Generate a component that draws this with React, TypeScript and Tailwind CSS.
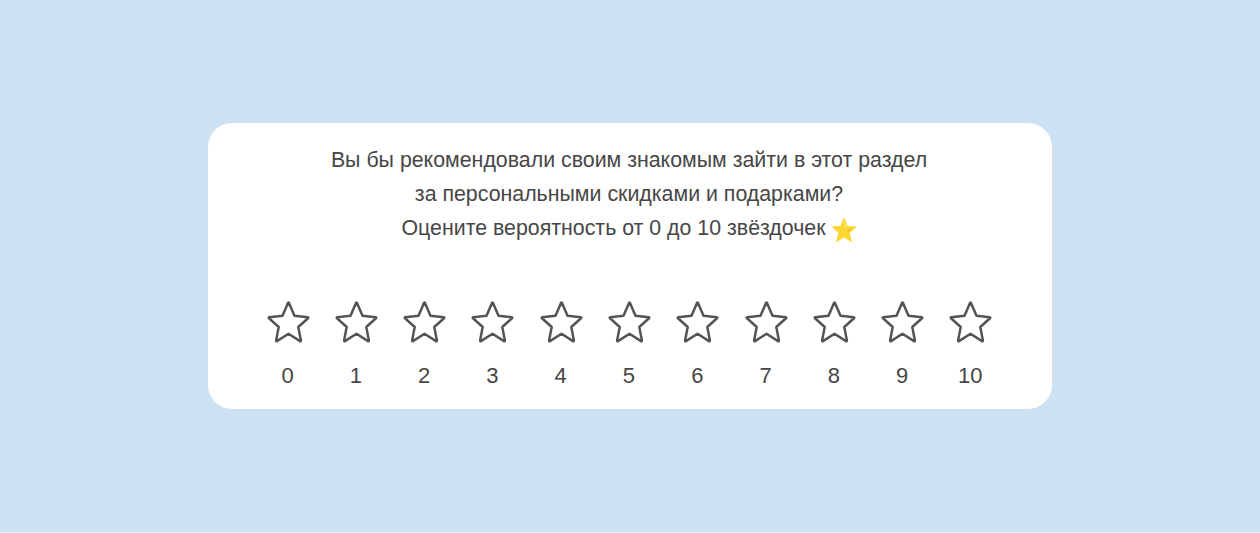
const scores = Array.from({ length: 11 }, (_, i) => i)

const RatingStar = () => (
  <svg className="translate-x-[0.5px]" width="48" height="48" viewBox="0 0 48 48" fill="none" aria-hidden="true">
    <path
      d="M23.5 5.9Q24 5.2 24.5 5.9L30 18.8L43.2 20.2Q44.3 20.4 43.5 21.2L33.8 30L36.4 43.5Q36.4 44.6 35.5 44.1L24 36.8L12.5 44.1Q11.6 44.6 11.6 43.5L14.2 30L4.5 21.2Q3.7 20.4 4.8 20.2L18 18.8Z"
      stroke="#545454"
      strokeWidth="2.5"
      strokeLinejoin="round"
    />
  </svg>
)

const GoldStar = () => (
  <svg className="mt-[3px] ml-[6px]" width="25" height="26" viewBox="0 0 25 26" aria-hidden="true">
    <path
      d="M12 1.5L15.1 9.3L23.5 10L17 15.5L19.1 24.2L12 19.8L4.9 24.2L7 15.5L0.8 10L8.9 9.3Z"
      fill="#fdd835"
      stroke="#fdd835"
      strokeWidth="1.2"
      strokeLinejoin="round"
    />
    <path d="M12.4 3.5L14.5 9.8L13 12Z" fill="#ffee72" />
    <path d="M15.5 13L21.5 10.8L16.8 14.6Z" fill="#f4b400" />
  </svg>
)

const App = () => {
  return (
    <div className="h-[533px] border-b border-[#e6f0f8] bg-[#cce1f2] pt-[123px] font-['Liberation_Sans',Arial,sans-serif] text-[#464646]">
      <main className="mx-auto h-[286px] w-[844px] rounded-[24px] bg-white pt-5 pr-0.5">
        <h1 className="text-center text-[21.35px] leading-[34px] font-normal">
          Вы бы рекомендовали своим знакомым зайти в этот раздел
          <br />
          за персональными скидками и подарками?
          <br />
          <span className="inline-flex h-[34px] items-center">
            Оцените вероятность от 0 до 10 звёздочек
            <GoldStar />
          </span>
        </h1>

        <div className="mx-auto mt-[52px] grid w-[751px] grid-cols-11">
          {scores.map((score) => (
            <button key={score} type="button" className="flex flex-col items-center">
              <RatingStar />
              <span className="mt-4 text-[22px] leading-[30px]">{score}</span>
            </button>
          ))}
        </div>
      </main>
    </div>
  )
}

export default App
